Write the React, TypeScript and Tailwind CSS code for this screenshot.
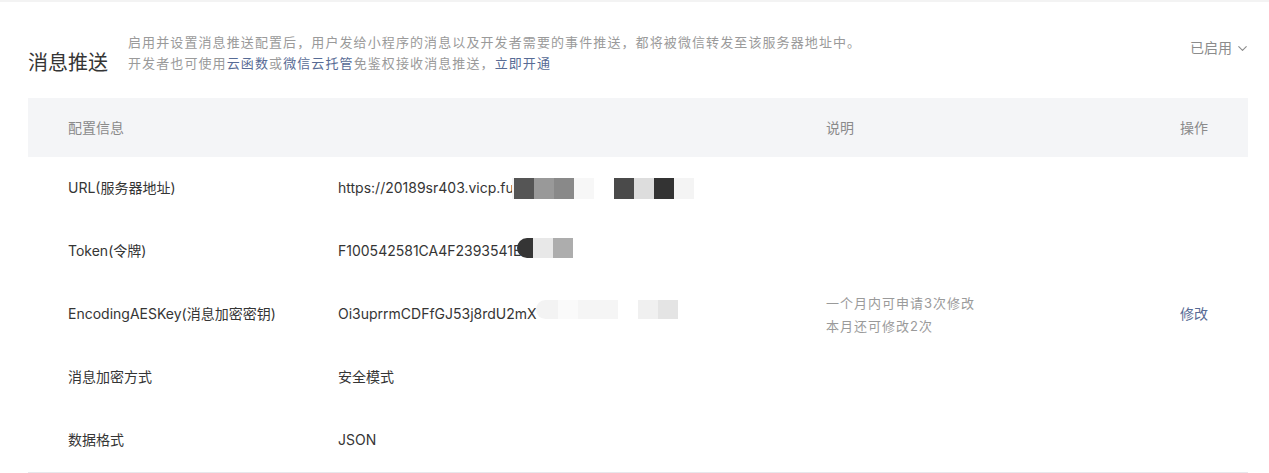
import { ChevronDown } from "lucide-react";

const font = "font-['Inter','Noto_Sans_CJK_SC',sans-serif]";

type Block = { w: number; c: string; rounded?: boolean; gap?: number };

function Mosaic({ blocks, h, y = 0 }: { blocks: Block[]; h: number; y?: number }) {
  return (
    <span className="inline-flex items-center" style={{ marginTop: y }}>
      {blocks.map((b, i) => (
        <span
          key={i}
          className={b.rounded ? "rounded-l-full" : ""}
          style={{ width: b.w, height: h, background: b.c, marginLeft: b.gap ?? 0 }}
        />
      ))}
    </span>
  );
}

const rows = [
  {
    label: "URL(服务器地址)",
    value: "https://20189sr403.vicp.fu",
    mosaic: (
      <Mosaic
        h={21}
        blocks={[
          { w: 2, c: "#f4f4f4", gap: -2 },
          { w: 20, c: "#555555" },
          { w: 20, c: "#999999" },
          { w: 20, c: "#898989" },
          { w: 20, c: "#f7f7f7" },
          { w: 20, c: "#4a4a4a", gap: 20 },
          { w: 20, c: "#dddddd" },
          { w: 20, c: "#333333" },
          { w: 20, c: "#f4f4f4" },
        ]}
      />
    ),
  },
  {
    label: "Token(令牌)",
    value: "F100542581CA4F2393541E",
    mosaic: (
      <span className="-ml-[4px] inline-flex">
        <Mosaic
          h={20}
          y={-7}
          blocks={[
            { w: 16, c: "#353535", rounded: true },
            { w: 20, c: "#e8e8e8" },
            { w: 20, c: "#adadad" },
          ]}
        />
      </span>
    ),
  },
  {
    label: "EncodingAESKey(消息加密密钥)",
    value: "Oi3uprrmCDFfGJ53j8rdU2mX",
    mosaic: (
      <span className="-ml-[1px] inline-flex">
        <Mosaic
          h={19}
          y={-10}
          blocks={[
            { w: 22, c: "#f3f3f3", rounded: true },
            { w: 20, c: "#fafafa" },
            { w: 40, c: "#f5f5f5" },
            { w: 20, c: "#f0f0f0", gap: 20 },
            { w: 20, c: "#e4e4e4" },
          ]}
        />
      </span>
    ),
    desc: ["一个月内可申请3次修改", "本月还可修改2次"],
    action: "修改",
  },
  { label: "消息加密方式", value: "安全模式" },
  { label: "数据格式", value: "JSON" },
];

export default function App() {
  return (
    <div className={`${font} w-[1269px] h-[473px] bg-white border-t-2 border-[#f3f3f3] text-[#353535]`}>
      <div className="pl-[28px] pr-[21px]">
        <div className="flex items-start justify-between pt-[30px]">
          <div className="flex items-end">
            <h2 className="text-[20px] leading-[28px] text-[#353535] w-[100px] mb-[-3px]">消息推送</h2>
            <div className="text-[13px] leading-[21px] text-[#9a9a9a] tracking-[1.1px]">
              <p>启用并设置消息推送配置后，用户发给小程序的消息以及开发者需要的事件推送，都将被微信转发至该服务器地址中。</p>
              <p>
                开发者也可使用<span className="text-[#576b95]">云函数</span>或
                <span className="text-[#576b95]">微信云托管</span>免鉴权接收消息推送，
                <span className="text-[#576b95]">立即开通</span>
              </p>
            </div>
          </div>
          <div className="flex items-center gap-[3px] pt-[6px] text-[14px] leading-[20px] text-[#8c8c8c]">
            已启用
            <ChevronDown size={15} strokeWidth={1.8} className="-mr-[2px]" />
          </div>
        </div>

        <div className="mt-[24px] border-b border-[#e7e7eb]">
          <div className="grid grid-cols-[310px_488px_354px_1fr] h-[59px] items-center bg-[#f4f5f7] text-[14px] text-[#8a8a8a]">
            <div className="pl-[40px]">配置信息</div>
            <div />
            <div>说明</div>
            <div>操作</div>
          </div>
          {rows.map((r) => (
            <div
              key={r.label}
              className="grid grid-cols-[310px_488px_354px_1fr] h-[63px] pb-[1px] items-center text-[14px] leading-[20px]"
            >
              <div className="pl-[40px]">{r.label}</div>
              <div className="flex items-center">
                <span>{r.value}</span>
                {r.mosaic}
              </div>
              <div className="text-[13px] leading-[23px] text-[#9a9a9a] tracking-[1px] pt-[2px]">
                {r.desc?.map((d) => <p key={d}>{d}</p>)}
              </div>
              <div className="text-[#576b95]">{r.action}</div>
            </div>
          ))}
        </div>
      </div>
    </div>
  );
}
